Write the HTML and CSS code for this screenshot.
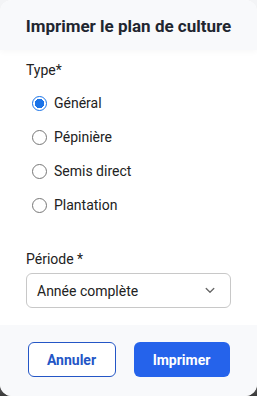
FILE: index.html
```html
<!DOCTYPE html>
<html lang="fr">
<head>
<meta charset="utf-8">
<link rel="stylesheet" href="styles.css">
</head>
<body>
<div class="modal">
  <div class="header"><h1 class="title">Imprimer le plan de culture</h1></div>
  <div class="content">
    <div class="label">Type*</div>
    <div class="radios">
      <label class="radio"><span class="dot checked"></span>Général</label>
      <label class="radio"><span class="dot"></span>Pépinière</label>
      <label class="radio"><span class="dot"></span>Semis direct</label>
      <label class="radio"><span class="dot"></span>Plantation</label>
    </div>
    <div class="label period">Période *</div>
    <div class="select">
      <span>Année complète</span>
      <svg class="chev" width="10" height="7" viewBox="0 0 10 7"><path d="M1.2 1.5 5 5.3 8.8 1.5" fill="none" stroke="#666" stroke-width="1.3" stroke-linecap="round" stroke-linejoin="round"/></svg>
    </div>
  </div>
  <div class="footer">
    <button class="btn outline">Annuler</button>
    <button class="btn primary">Imprimer</button>
  </div>
</div>
</body>
</html>
```
FILE: styles.css
```css
html, body { margin: 0; padding: 0; }
body {
  width: 257px; height: 396px; overflow: hidden;
  background: linear-gradient(#f3f4f6 0%, #f3f4f6 85%, #3a3a3a 100%);
  font-family: Roboto, "Liberation Sans", sans-serif;
  color: #1f2328;
}
.modal {
  height: 396px; border-radius: 12px; overflow: hidden;
  display: flex; flex-direction: column; background: #fff;
}
.header {
  height: 50px; background: #f8f9fb;
  display: flex; align-items: center; justify-content: center;
  box-shadow: 0 2px 6px rgba(0,0,0,0.03);
}
.title { margin: 0; font-size: 17px; font-weight: 700; color: #1f2630; padding-top: 2px; }
.content { flex: 1; padding: 12px 26px 0 26px; }
.label { font-size: 14px; color: #222; line-height: 16px; }
.radios { display: flex; flex-direction: column; padding-top: 8px; }
.radio {
  display: flex; align-items: center; height: 34px;
  font-size: 14px; color: #222; padding-left: 6px;
}
.dot {
  width: 15px; height: 15px; border-radius: 50%;
  border: 1px solid #777; margin-right: 7px; box-sizing: border-box;
}
.dot.checked {
  border: 1.5px solid #1a73e8;
  background: radial-gradient(circle, #1a73e8 0 4.5px, #fff 5px);
}
.period { margin-top: 29px; }
.select {
  margin-top: 6px; height: 35px; box-sizing: border-box;
  border: 1px solid #c8c8c8; border-radius: 6px;
  display: flex; align-items: center; justify-content: space-between;
  padding: 0 15px 0 10px; font-size: 14px; color: #222;
}
.footer {
  height: 71px; background: #f8f9fb;
  display: flex; align-items: center; justify-content: center; gap: 18px;
  padding-bottom: 2px; box-sizing: border-box;
}
.btn {
  height: 35px; border-radius: 6px; font-family: inherit;
  font-size: 14px; font-weight: 700; box-sizing: border-box;
}
.outline { width: 88px; background: #fff; border: 1px solid #2456c6; color: #2456c6; }
.primary { width: 96px; background: #2563eb; border: none; color: #fff; }
```
